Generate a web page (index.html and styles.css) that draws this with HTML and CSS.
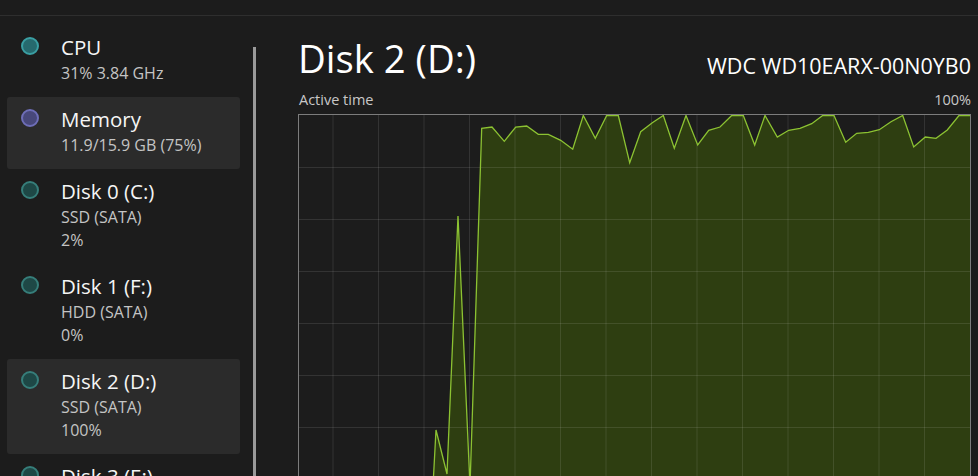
FILE: index.html
```html
<!DOCTYPE html>
<html lang="en">

<head>
    <meta charset="UTF-8">
    <title>Performance</title>
    <link rel="stylesheet" href="styles.css">
</head>

<body>
    <div class="titlebar"></div>

    <div class="page">
        <!-- left list of devices -->
        <div class="side">
            <div class="item">
                <span class="dot dot_cpu"></span>
                <div class="info">
                    <p class="name">CPU</p>
                    <p class="sub">31% 3.84 GHz</p>
                </div>
            </div>
            <div class="item active">
                <span class="dot dot_mem"></span>
                <div class="info">
                    <p class="name">Memory</p>
                    <p class="sub">11.9/15.9 GB (75%)</p>
                </div>
            </div>
            <div class="item">
                <span class="dot dot_disk"></span>
                <div class="info">
                    <p class="name">Disk 0 (C:)</p>
                    <p class="sub">SSD (SATA)</p>
                    <p class="sub">2%</p>
                </div>
            </div>
            <div class="item">
                <span class="dot dot_disk"></span>
                <div class="info">
                    <p class="name">Disk 1 (F:)</p>
                    <p class="sub">HDD (SATA)</p>
                    <p class="sub">0%</p>
                </div>
            </div>
            <div class="item active">
                <span class="dot dot_disk"></span>
                <div class="info">
                    <p class="name">Disk 2 (D:)</p>
                    <p class="sub">SSD (SATA)</p>
                    <p class="sub">100%</p>
                </div>
            </div>
            <div class="item">
                <span class="dot dot_disk"></span>
                <div class="info">
                    <p class="name">Disk 3 (E:)</p>
                    <p class="sub">HDD (SATA)</p>
                    <p class="sub">0%</p>
                </div>
            </div>
        </div>
        <div class="scroll"></div>

        <!-- right side: graph -->
        <div class="main">
            <div class="head">
                <h1>Disk 2 (D:)</h1>
                <span class="model">WDC WD10EARX-00N0YB0</span>
            </div>
            <div class="labels">
                <span>Active time</span>
                <span>100%</span>
            </div>
            <div class="chart">
                <svg width="671" height="520" viewBox="0 0 671 520">
                    <polygon class="area" points="0,520 126,520 137,315 148,359 159,101 171,371 182.7,13.3 193,12 205.3,26.3 216.7,12 227.7,11 239.3,19.3 249.3,19.3 261.7,25.3 273.7,34.3 284.3,0.5 296.3,23.3 307.7,0.5 319.3,0.5 330.7,47.7 341.7,16.7 353.3,7.7 364.3,0.5 375.3,33.3 387,0.5 398.7,30 409.7,15.3 421,12 432.7,0.5 444.3,0.5 455.7,30 466,0.5 478.3,22 489.7,15.3 501,13.3 512.7,8.7 523.7,0.5 535,0.5 546.7,27.3 557.7,18.3 569.3,17.3 580.3,14.7 592,6.7 603.7,0.5 614.7,32 626.3,22 637,23.3 648.3,15 660,0.5 671,0.5 671,520" />
                    <g class="grid">
                        <line x1="34" y1="0" x2="34" y2="520" />
                        <line x1="79.5" y1="0" x2="79.5" y2="520" />
                        <line x1="125" y1="0" x2="125" y2="520" />
                        <line x1="170.5" y1="0" x2="170.5" y2="520" />
                        <line x1="216" y1="0" x2="216" y2="520" />
                        <line x1="261.5" y1="0" x2="261.5" y2="520" />
                        <line x1="307" y1="0" x2="307" y2="520" />
                        <line x1="352.5" y1="0" x2="352.5" y2="520" />
                        <line x1="398" y1="0" x2="398" y2="520" />
                        <line x1="443.5" y1="0" x2="443.5" y2="520" />
                        <line x1="489" y1="0" x2="489" y2="520" />
                        <line x1="534.5" y1="0" x2="534.5" y2="520" />
                        <line x1="580" y1="0" x2="580" y2="520" />
                        <line x1="625.5" y1="0" x2="625.5" y2="520" />
                        <line x1="0" y1="52.5" x2="671" y2="52.5" />
                        <line x1="0" y1="104.5" x2="671" y2="104.5" />
                        <line x1="0" y1="156.5" x2="671" y2="156.5" />
                        <line x1="0" y1="208.5" x2="671" y2="208.5" />
                        <line x1="0" y1="260.5" x2="671" y2="260.5" />
                        <line x1="0" y1="312.5" x2="671" y2="312.5" />
                        <line x1="0" y1="364.5" x2="671" y2="364.5" />
                        <line x1="0" y1="416.5" x2="671" y2="416.5" />
                        <line x1="0" y1="468.5" x2="671" y2="468.5" />
                    </g>
                    <polyline class="line" points="0,520 126,520 137,315 148,359 159,101 171,371 182.7,13.3 193,12 205.3,26.3 216.7,12 227.7,11 239.3,19.3 249.3,19.3 261.7,25.3 273.7,34.3 284.3,0.5 296.3,23.3 307.7,0.5 319.3,0.5 330.7,47.7 341.7,16.7 353.3,7.7 364.3,0.5 375.3,33.3 387,0.5 398.7,30 409.7,15.3 421,12 432.7,0.5 444.3,0.5 455.7,30 466,0.5 478.3,22 489.7,15.3 501,13.3 512.7,8.7 523.7,0.5 535,0.5 546.7,27.3 557.7,18.3 569.3,17.3 580.3,14.7 592,6.7 603.7,0.5 614.7,32 626.3,22 637,23.3 648.3,15 660,0.5 671,0.5" />
                </svg>
            </div>
        </div>
    </div>
</body>

</html>
```

FILE: styles.css
```css
body,
div,
p,
h1 {
    margin: 0;
    padding: 0;
}

body {
    background: #1c1c1c;
    color: #f2f2f2;
    font-family: "Open Sans", "Noto Sans", sans-serif;
    overflow: hidden;
    height: 476px;
}

.titlebar {
    height: 15px;
    border-bottom: 1px solid #2e2e2e;
}

.page {
    display: flex;
}

.side {
    width: 233px;
    padding: 9px 7px 0 7px;
}

.item {
    display: flex;
    align-items: flex-start;
    padding: 8px 0 12px 0;
    border-radius: 3px;
}

.item.active {
    background: #2b2b2b;
}

.dot {
    width: 14px;
    height: 14px;
    border-radius: 50%;
    margin: 4px 0 0 14px;
    flex-shrink: 0;
}

.dot_cpu {
    background: #266a6e;
    border: 2px solid #3a9fa3;
}

.dot_mem {
    background: #48487a;
    border: 2px solid #6e6eb8;
}

.dot_disk {
    background: #1e4846;
    border: 2px solid #367e7a;
}

.info {
    margin-left: 22px;
}

.name {
    font-size: 20.5px;
    line-height: 29px;
    color: #f5f5f5;
}

.sub {
    font-size: 16px;
    line-height: 23px;
    color: #c4c4c4;
}

.scroll {
    width: 3px;
    height: 440px;
    margin: 31px 0 0 6px;
    background: #9a9a9a;
}

.main {
    flex: 1;
    margin-left: 42px;
    padding-right: 7px;
}

.head {
    display: flex;
    justify-content: space-between;
    align-items: flex-end;
    height: 74px;
}

.head h1 {
    font-weight: normal;
    font-size: 38.3px;
    line-height: 50px;
    color: #ffffff;
    margin-bottom: 7px;
}

.model {
    font-size: 21.5px;
    line-height: 30px;
    color: #ffffff;
    margin-bottom: 9px;
}

.labels {
    display: flex;
    justify-content: space-between;
    font-size: 14.5px;
    line-height: 20px;
    color: #c8c8c8;
    padding: 0 0 0 1px;
    margin-bottom: 4px;
}

.chart {
    border: 1px solid #7c7c7c;
    width: 671px;
    height: 520px;
}

.chart svg {
    display: block;
}

.area {
    fill: #2e3e11;
}

.grid line {
    stroke: rgba(255, 255, 255, 0.1);
    stroke-width: 1;
}

.line {
    fill: none;
    stroke: #8cc232;
    stroke-width: 1.3;
    stroke-linejoin: miter;
}
```
